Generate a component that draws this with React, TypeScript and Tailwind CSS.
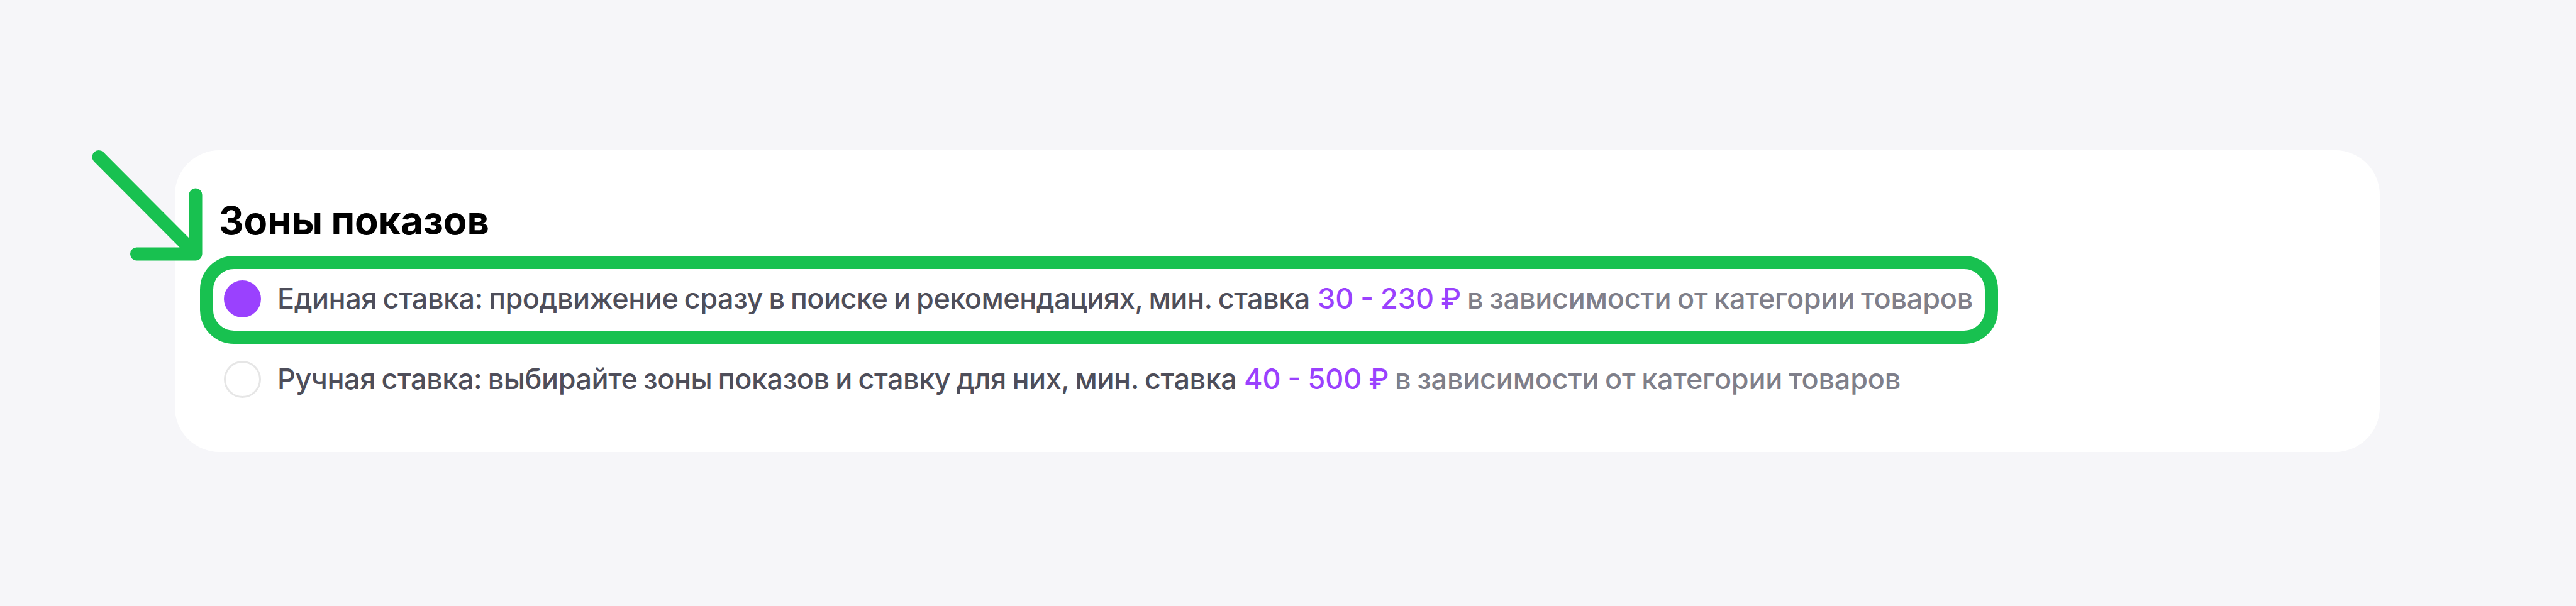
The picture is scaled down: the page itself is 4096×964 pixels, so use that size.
interface IBidOptionProps {
  checked?: boolean;
  label: React.ReactNode;
  highlighted?: boolean;
}

function BidOption({ checked, label, highlighted }: IBidOptionProps) {
  return (
    <div className="relative flex h-[59px] w-fit items-center gap-[26px]">
      {highlighted && (
        <div className="absolute -top-[39px] -bottom-[42px] -left-[38px] w-[2859px] rounded-[54px] border-[21px] border-[#18c150]" />
      )}
      <span
        className={
          checked
            ? "size-[59px] rounded-full bg-[#9a41fe]"
            : "size-[59px] rounded-full border-[3px] border-[#e6e6e6]"
        }
      />
      <p className="flex pb-[2px] text-[45px] leading-[57px] font-[450] whitespace-nowrap text-[#4e4e5a]">
        {label}
      </p>
    </div>
  );
}

export default function App() {
  return (
    <main className="relative h-[964px] w-[4096px] overflow-hidden bg-[#f6f6f9] pt-[239px] pl-[278px] font-['Inter',sans-serif]">
      <section className="flex h-[480px] w-[3506px] flex-col rounded-[71px] bg-white pt-[75px] pl-[78px]">
        <h2 className="-ml-[8px] text-[61.5px] leading-[74px] font-bold tracking-[-0.1px] [word-spacing:-1px] text-black">
          Зоны показов
        </h2>
        <div className="mt-[58px] flex flex-col gap-[69px]">
          <BidOption
            checked
            highlighted
            label={
              <>
                <span className="w-[1643px] tracking-[-0.5px] [word-spacing:-2px]">
                  Единая ставка: продвижение сразу в поиске и рекомендациях, мин. ставка
                </span>
                <span className="ml-[11px] w-[229px] [word-spacing:-1px] text-[#9a41fe]">
                  30 - 230 ₽
                </span>
                <span className="ml-[9px] tracking-[-0.22px] [word-spacing:-2px] text-[#7f7f8a]">
                  в зависимости от категории товаров
                </span>
              </>
            }
          />
          <BidOption
            label={
              <>
                <span className="w-[1527px] tracking-[-0.45px] [word-spacing:-2px]">
                  Ручная ставка: выбирайте зоны показов и ставку для них, мин. ставка
                </span>
                <span className="ml-[10px] w-[231px] [word-spacing:-1px] text-[#9a41fe]">
                  40 - 500 ₽
                </span>
                <span className="ml-[9px] tracking-[-0.22px] [word-spacing:-2px] text-[#7f7f8a]">
                  в зависимости от категории товаров
                </span>
              </>
            }
          />
        </div>
      </section>
      {/* arrow pointing at the highlighted option */}
      <svg
        className="absolute top-[236px] left-[142px]"
        width="184"
        height="182"
        viewBox="0 0 184 182"
        fill="none"
        stroke="#18c150"
        strokeWidth="21"
        strokeLinecap="round"
        strokeLinejoin="round"
      >
        <path d="M15 13.5L169 168M169 74V168H75.5" />
      </svg>
    </main>
  );
}
